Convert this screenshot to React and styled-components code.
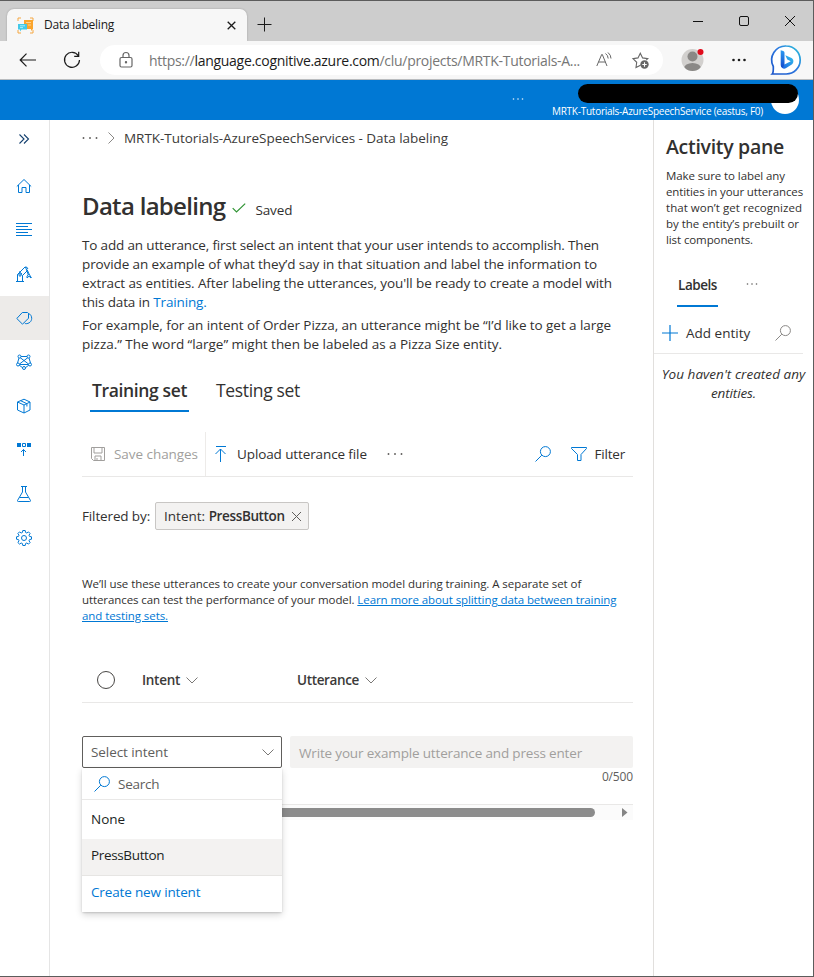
import React from "react";
import styled, { createGlobalStyle, css } from "styled-components";

const Global = createGlobalStyle`
  * { box-sizing: border-box; }
  body { margin: 0; background: #fff; font-family: "Open Sans", "Noto Sans", sans-serif; color: #323130; font-size: 13.5px; }
  svg { display: block; flex: none; overflow: visible; }
`;

const BLUE = "#0078d4";

const Window = styled.div`
  width: 814px; height: 977px; display: flex; flex-direction: column; overflow: hidden;
  background: #fff; border: solid #5c5c5c; border-width: 1px 1px 1px 0;
`;
const T = styled.span`
  display: inline-block; white-space: pre;
  letter-spacing: ${(p) => p.$ls || 0}px;
  font-size: ${(p) => p.$size || 13.5}px;
  font-weight: ${(p) => p.$w || 400};
  color: ${(p) => p.$c || "inherit"};
`;

/* ---- browser chrome ---- */
const TabStrip = styled.div`
  height: 40px; flex: none; background: #cdcdcd; display: flex; align-items: flex-end; padding-left: 7px;
`;
const BrowserTab = styled.div`
  width: 240px; height: 32px; background: #f7f7f7; border-radius: 7px 7px 0 0;
  display: flex; align-items: center; padding: 0 11px 0 10px; color: #1b1b1b;
  box-shadow: 0 0 2px rgba(0,0,0,.25);
`;
const TabTitle = styled(T)`flex: 1; margin-left: 10px; line-height: 16px; padding-bottom: 1px;`;
const NewTab = styled.div`height: 32px; display: flex; align-items: center; margin-left: 10px; padding-bottom: 2px;`;
const WinControls = styled.div`
  height: 40px; margin-left: auto; display: flex; align-items: center; gap: 36px; padding-right: 18px;
`;
const Toolbar = styled.div`
  height: 39px; flex: none; background: #f7f7f7; border-bottom: 1px solid #b9bcbf;
  display: flex; align-items: center; padding: 0 12px 0 19px;
`;
const Address = styled.div`
  width: 564px; height: 30px; margin-left: 19px; background: #fff; border-radius: 15px;
  display: flex; align-items: center; padding: 0 14px 0 19px;
`;
const Url = styled(T)`flex: 1; margin-left: 16px; color: #767676; b { font-weight: 400; color: #1b1b1b; }`;
const Gap = styled.div`width: ${(p) => p.$n}px; flex: none;`;

/* ---- azure header ---- */
const AzureBar = styled.header`
  height: 40px; flex: none; background: ${BLUE}; color: #fff; position: relative;
  display: flex; align-items: flex-end; justify-content: flex-end; padding: 0 14px 2px 0;
`;
const BarDots = styled.div`align-self: center; margin-right: 28px;`;
const Avatar = styled.div`width: 28px; height: 28px; border-radius: 50%; background: #fff; margin: 0 0 4px 8px;`;
const Redaction = styled.div`
  position: absolute; right: 15px; top: 4px; width: 220px; height: 19px; border-radius: 10px; background: #000;
`;

/* ---- page ---- */
const Body = styled.div`flex: 1; display: flex; min-height: 0;`;
const Nav = styled.nav`width: 50px; flex: none; border-right: 1px solid #e5e5e5;`;
const NavItem = styled.div`
  height: 44px; display: flex; align-items: center; justify-content: center; color: ${BLUE}; padding-right: 1px;
  background: ${(p) => (p.$active ? "#edebe9" : "transparent")};
  ${(p) => p.$first && css`padding-bottom: 6px;`}
`;
const Main = styled.main`width: 603px; flex: none; padding: 0 20px 0 32px;`;
const Crumbs = styled.div`height: 36px; display: flex; align-items: center; color: #3b3a39;`;
const TitleRow = styled.div`height: 34px; margin-top: 33px; display: flex; align-items: center; line-height: 34px;`;
const Saved = styled.div`display: flex; align-items: center; gap: 9px; padding-top: 7px;`;
const SavedMark = styled.div`padding-bottom: 3px;`;
const Paragraph = styled.div`
  line-height: ${(p) => p.$lh || 19}px; margin-top: ${(p) => p.$mt || 0}px;
  font-size: ${(p) => p.$size || 13.5}px;
  ${T} { display: block; font-size: ${(p) => p.$size || 13.5}px; }
`;
const Link = styled.a`color: ${BLUE}; text-decoration: ${(p) => (p.$u ? "underline" : "none")}; text-underline-offset: 1px;`;
const Tabs = styled.div`display: flex; height: 41px; margin: 17px 0 0 8px; gap: 25px;`;
const Tab = styled.div`
  height: 41px; line-height: 39px; padding: 0 2px; border-bottom: 2px solid ${(p) => (p.$on ? BLUE : "transparent")};
`;
const Commands = styled.div`
  height: 45px; margin-top: 20px; border-bottom: 1px solid #e9e8e7; display: flex; align-items: center;
`;
const SaveCmd = styled.div`
  width: 124px; height: 44px; border-right: 1px solid #edebe9; display: flex; align-items: center; gap: 9px;
  padding-left: 9px; color: #a19f9d;
`;
const UploadCmd = styled.div`display: flex; align-items: center; gap: 10px; margin: 0 20px 0 8px;`;
const RightCmds = styled.div`margin-left: auto; display: flex; align-items: center; padding-right: 8px;`;
const FilterRow = styled.div`display: flex; align-items: center; height: 28px; margin-top: 25px; gap: 5px;`;
const Tag = styled.div`
  width: 154px; height: 28px; border: 1px solid #c8c6c4; border-radius: 2px; background: #f3f2f1;
  display: flex; align-items: center; padding-left: 8px;
`;
const TableHead = styled.div`
  height: 45px; margin-top: 34px; border-bottom: 1px solid #e9e8e7; display: flex; align-items: center;
  padding-left: 15px; color: #3b3a39;
`;
const Check = styled.div`width: 18px; height: 18px; border: 1px solid #484644; border-radius: 50%; margin-right: 27px;`;
const Column = styled.div`width: 155px; display: flex; align-items: center; gap: 6px;`;
const Entry = styled.div`display: flex; gap: 8px; margin-top: 33px; height: 32px;`;
const Select = styled.div`
  width: 200px; height: 32px; position: relative; border: 1px solid #605e5c; border-radius: 2px;
  display: flex; align-items: center; justify-content: space-between; padding: 0 7px 0 8px; color: #605e5c;
`;
const Menu = styled.div`
  position: absolute; left: -1px; top: 31px; width: 200px; height: 144px; background: #fff; border-radius: 0 0 2px 2px;
  box-shadow: 0 3px 7px rgba(0,0,0,.16), 0 1px 2px rgba(0,0,0,.14); color: #201f1e;
`;
const MenuSearch = styled.div`
  height: 32px; display: flex; align-items: center; gap: 8px; padding-left: 12px;
  border-bottom: 1px solid #e9e8e7; color: #605e5c;
`;
const MenuItem = styled.div`
  height: ${(p) => p.$h}px; display: flex; align-items: center; padding: 0 0 ${(p) => p.$pb || 0}px 9px;
  background: ${(p) => (p.$hover ? "#f3f2f1" : "#fff")};
  border-bottom: ${(p) => (p.$hover ? "1px solid #e6e5e3" : "none")};
`;
const Input = styled.div`
  flex: 1; height: 32px; background: #f3f2f1; border-radius: 2px; color: #a19f9d;
  display: flex; align-items: center; padding: 2px 0 0 9px;
`;
const Counter = styled.div`text-align: right; line-height: 16px; color: #605e5c; height: 36px;`;
const Scroll = styled.div`
  height: 16px; border-top: 1px solid #e9e8e7; background: #fbfbfb; display: flex; align-items: center;
  padding: 0 5px 0 16px; justify-content: space-between;
`;
const Thumb = styled.div`width: 497px; height: 9px; border-radius: 5px; background: #8b8b8b;`;

const Aside = styled.aside`flex: 1; border-left: 1px solid #e1dfdd;`;
const AsideTitle = styled.div`padding: 13px 0 0 12px; line-height: 28px;`;
const AsideText = styled.div`padding: 5px 0 0 12px; line-height: 16px; ${T} { display: block; }`;
const AsideTabs = styled.div`display: flex; margin: 19px 0 0 23px; height: 40px; gap: 28px;`;
const AsideTab = styled.div`height: 40px; line-height: 37px; padding: 0 1px; border-bottom: 2px solid ${BLUE};`;
const AsideDots = styled.div`height: 34px; display: flex; align-items: center;`;
const AddRow = styled.div`
  height: 41px; margin: 6px 10px 0 0; border-bottom: 1px solid #e9e8e7; display: flex; align-items: center;
  padding: 0 12px 0 8px; justify-content: space-between;
`;
const AddButton = styled.div`display: flex; align-items: center; gap: 8px;`;
const Empty = styled.div`padding: 11px 0 0 0; line-height: 19px; text-align: center; font-style: italic;`;

/* ---- drawings ---- */
const Icon = ({ w = 16, h, vb, sw = 1, c = "currentColor", children, ...rest }) => (
  <svg width={w} height={h || w} viewBox={vb || `0 0 ${w} ${h || w}`} fill="none" stroke={c} strokeWidth={sw} {...rest}>
    {children}
  </svg>
);
const Dots = ({ c = "#605e5c", w = 16, r = 0.95 }) => (
  <Icon w={w} h={4} c="none">
    {[1.5, w / 2, w - 1.5].map((x) => <circle key={x} cx={x} cy="2" r={r} fill={c} />)}
  </Icon>
);
const SearchIcon = ({ c = BLUE }) => (
  <Icon w={16} c={c}><circle cx="10.4" cy="5.6" r="5" /><path d="M6.8 9.2L.5 15.5" /></Icon>
);
const Chevron = () => <Icon w={12} h={7} c="#7a7876"><path d="M.5.5L6 6l5.5-5.5" /></Icon>;

const Favicon = () => (
  <svg width="17" height="17" viewBox="0 0 17 17">
    <path d="M1 4V1h3M13 1h3v3M16 13v3h-3M4 16H1v-3" fill="none" stroke="#f5a742" />
    <path d="M7 3h9v9l-2 2v-2H7z" fill="#fba52d" />
    <path d="M9 5.5h5M11 8h3" stroke="#ffd390" />
    <path d="M1 7h9v5.5H4.5L3 14.5v-2H1z" fill="#43c9e8" />
    <path d="M3 8.800h5M3 10.600h3" stroke="#a9eefb" />
  </svg>
);
const Bing = () => (
  <svg width="30" height="31" viewBox="0 0 30 31">
    <defs>
      <linearGradient id="ring" x1="0" y1="1" x2="1" y2="0">
        <stop offset="0" stopColor="#1c55c9" /><stop offset=".55" stopColor="#2b78e0" /><stop offset="1" stopColor="#2cc3da" />
      </linearGradient>
      <linearGradient id="stem" x1="0" y1="0" x2="0" y2="1">
        <stop offset="0" stopColor="#2b9bf2" /><stop offset="1" stopColor="#1448cc" />
      </linearGradient>
      <linearGradient id="bowl" x1="0" y1="1" x2="1" y2="0">
        <stop offset="0" stopColor="#1a5fe0" /><stop offset="1" stopColor="#35c4ee" />
      </linearGradient>
    </defs>
    <path d="M15.200 1A14 14 0 0 1 15.200 29H1.200c1-1 1.300-3 1.100-7.500A14 14 0 0 1 15.200 1z" fill="#fff" stroke="url(#ring)" strokeWidth="1.700" />
    <path d="M14.300 10.300l2 4.300 3.500 1.700-9.800 5c.9 2.400 3.200 3 5.200 1.700l5.600-3.600c2.500-2 2-5.600-.8-6.700z" fill="url(#bowl)" />
    <path d="M9.700 5.200l2.600.9q1.200.5 1.200 1.700v12l-2 3q-1.800-.7-1.800-2.800z" fill="url(#stem)" />
  </svg>
);
const Person = () => (
  <svg width="24" height="24" viewBox="0 0 24 24">
    <defs><clipPath id="disc"><circle cx="11.500" cy="12" r="11" /></clipPath></defs>
    <circle cx="11.500" cy="12" r="11" fill="#d2d0ce" />
    <g clipPath="url(#disc)" fill="#8a8886"><circle cx="11.500" cy="8.500" r="5" /><ellipse cx="11.500" cy="20.500" rx="8.500" ry="5.500" /></g>
    <circle cx="19.500" cy="4" r="3" fill="#e00b1c" />
  </svg>
);

const navIcons = [
  <Icon key="home" w={16}><path d="M.8 8.500L8 1.500 15.200 8.500M2.500 7v7.500h3.500V9.500h4v5h3.500V7" /></Icon>,
  <Icon key="lines" w={16}><path d="M0 1.500h16M0 4.500h12M0 7.500h16M0 10.500h12M0 13.500h16" /></Icon>,
  <Icon key="robot" w={16}>
    <path d="M0 15.500h8M1.500 15.500V8.500L9 1l2 .3.900 1.700M6.500 15.500v-6L11 5M1.500 8.500L4 7.500l2.500 2M3 5.500l3 2.500M9.500 1l2.700 7.500M11 3.500l2.300 5M12.500 8l-2 3.500M13 8l2.500 4M11 12l2-1.800 2 1.800" /><circle cx="4" cy="9.500" r=".8" />
  </Icon>,
  <Icon key="tag" w={16}>
    <path d="M6.300 2.500L.8 8.500l5.700 5.700 6-6V3.500l-1-1zM12.300 3.300c2.300.9 3.400 3 3.400 5 0 3.300-2.700 5.500-6.200 5.400l-1-1" />
  </Icon>,
  <Icon key="graph" w={16}>
    <path d="M4 2.500h8M3 4l-1.500 5M13 4l1.500 5M3 11l4 3M13 11l-4 3M4 3.500l8.500 6.500M12 3.500L3.500 10M3.500 10.500h9" />
    <circle cx="3.500" cy="2.500" r="1.500" fill="#fff" /><circle cx="12.500" cy="2.500" r="1.500" fill="#fff" />
    <circle cx="2" cy="10.500" r="1.500" fill="#fff" /><circle cx="14" cy="10.500" r="1.500" fill="#fff" /><circle cx="8" cy="14" r="1.500" fill="#fff" />
  </Icon>,
  <Icon key="box" w={16}><path d="M1.500 4L8 1.200 14 4v8L8 15l-6.500-3zM1.500 4L8 7l6-3M8 7v8M4.600 2.700l6.300 3v2.800" /></Icon>,
  <Icon key="deploy" w={16}>
    <path d="M1 1h4v4H1zM11 1h4v4h-4z" fill={BLUE} stroke="none" /><path d="M6.500 1.500h3v3h-3zM7.500 14V7.500M5 10l2.500-2.500L10 10" />
  </Icon>,
  <Icon key="flask" w={16}><path d="M5 .5h6M6.500.5V6L1.500 14.500q-.2 1 .8 1h11.400q1 0 .8-1L9.500 6V.5M3.500 11.500h9" /></Icon>,
  <Icon key="gear" w={16}>
    <circle cx="8" cy="8" r="2.500" />
    <path d="M6.800.5h2.400l.4 2 1.200.5 1.700-1.100 1.600 1.600-1.100 1.700.5 1.200 2 .4v2.400l-2 .4-.5 1.200 1.100 1.700-1.600 1.600-1.700-1.100-1.200.5-.4 2H6.800l-.4-2-1.200-.5-1.700 1.100-1.600-1.600L3 10.800l-.5-1.200-2-.4V6.800l2-.4L3 5.200 1.900 3.500l1.600-1.600L5.200 3l1.200-.5z" />
  </Icon>,
];

export default function App() {
  return (
    <Window>
      <Global />
      <TabStrip>
        <BrowserTab>
          <Favicon />
          <TabTitle $size={12} $ls={-0.24}>Data labeling</TabTitle>
          <Icon w={9} c="#1b1b1b" sw={1.3}><path d="M.7.7l7.600 7.600M8.300.7L.7 8.300" /></Icon>
        </BrowserTab>
        <NewTab><Icon w={14} c="#1b1b1b"><path d="M7.500.5v14M.5 7.500h14" /></Icon></NewTab>
        <WinControls>
          <Icon w={10} c="#111"><path d="M0 5.500h10" /></Icon>
          <Icon w={10} c="#111"><rect x=".5" y=".5" width="9" height="9" rx="1.500" /></Icon>
          <Icon w={10} c="#111"><path d="M0 0l10 10M10 0L0 10" /></Icon>
        </WinControls>
      </TabStrip>
      <Toolbar>
        <Icon w={17} h={14} c="#1b1b1b" sw={1.2}><path d="M17 7H1.500M7.500.7L1.200 7l6.300 6.300" /></Icon>
        <Gap $n={27} />
        <Icon w={18} c="#1b1b1b" sw={1.2}><path d="M15.300 4.700A7.500 7.500 0 1 0 16.500 9M15.700.8v4.500h-4.500" /></Icon>
        <Address>
          <Icon w={14} h={16} c="#666" sw={1.2}>
            <rect x="1" y="5.500" width="12" height="9.500" rx="1.500" /><path d="M4 5.500V3.500a3 3 0 0 1 6 0v2" /><circle cx="7" cy="10.200" r=".6" fill="#666" />
          </Icon>
          <Url $size={14} $ls={-0.29}>https://<b>language.cognitive.azure.com</b>/clu/projects/MRTK-Tutorials-A...</Url>
          <Icon w={16} c="#666">
            <path d="M.8 14L5.700 2.500h.6L11 14M2.500 10h7M9.500 1.500q2.500 1.700 2.700 5M12 .5q3 2.500 3 6" />
          </Icon>
          <Gap $n={20} />
          <Icon w={17} c="#666" sw={1.1}>
            <path d="M8.500 13.200L4 15.500l.7-5.200L1 6.700l5-.8L8.300 1.200l2.300 4.700 5.200.8-1.600 1.500" /><circle cx="12.500" cy="12.500" r="4.200" fill="#666" stroke="none" /><path d="M12.500 10.300v4.400M10.300 12.500h4.400" stroke="#fff" />
          </Icon>
        </Address>
        <Gap $n={18} /><Person /><Gap $n={27} /><Dots c="#1b1b1b" w={14} r={1.3} /><Gap $n={25} /><Bing />
      </Toolbar>
      <AzureBar>
        <BarDots><Dots c="#e5f1fb" w={12} r={0.8} /></BarDots>
        <T $size={10} $ls={-0.25}>MRTK-Tutorials-AzureSpeechService (eastus, F0)</T>
        <Avatar />
        <Redaction />
      </AzureBar>
      <Body>
        <Nav>
          <NavItem $first><Icon w={10} c="#14406f" sw={1.1}><path d="M.5.5L5 5 .5 9.500M5 .5L9.500 5 5 9.500" /></Icon></NavItem>
          {navIcons.map((icon, i) => <NavItem key={i} $active={i === 3}>{icon}</NavItem>)}
        </Nav>
        <Main>
          <Crumbs>
            <Dots /><Gap $n={10} />
            <Icon w={7} h={12} c="#8a8886"><path d="M.5.5L6 6 .5 11.500" /></Icon><Gap $n={9} />
            <T $ls={-0.047}>MRTK-Tutorials-AzureSpeechServices - Data labeling</T>
          </Crumbs>
          <TitleRow>
            <T $size={24} $w={600} $ls={-0.7}>Data labeling</T><Gap $n={7} />
            <Saved>
              <SavedMark><Icon w={14} h={10} c="#2f9333" sw={1.2}><path d="M.7 5.200L4.500 9 13.200.6" /></Icon></SavedMark>
              <T $ls={-0.1}>Saved</T>
            </Saved>
          </TitleRow>
          <Paragraph $mt={13}>
            <T $ls={-0.158}>To add an utterance, first select an intent that your user intends to accomplish. Then</T>
            <T $ls={-0.101}>provide an example of what they’d say in that situation and label the information to</T>
            <T $ls={-0.104}>extract as entities. After labeling the utterances, you'll be ready to create a model with</T>
            <T $ls={-0.15}>this data in <Link>Training.</Link></T>
          </Paragraph>
          <Paragraph $mt={4}>
            <T $ls={-0.065}>For example, for an intent of Order Pizza, an utterance might be “I’d like to get a large</T>
            <T $ls={-0.04}>pizza.” The word “large” might then be labeled as a Pizza Size entity.</T>
          </Paragraph>
          <Tabs>
            <Tab $on><T $size={17.5} $w={600} $ls={-0.363}>Training set</T></Tab>
            <Tab><T $size={17.5} $ls={-0.331}>Testing set</T></Tab>
          </Tabs>
          <Commands>
            <SaveCmd>
              <Icon w={14}><path d="M.5.5h13v13h-11l-2-2zM3 .5v5.500h8V.5M4 13.500V9h6v4.500M6 11v2.500" /></Icon>
              <T $ls={-0.05}>Save changes</T>
            </SaveCmd>
            <UploadCmd>
              <Icon w={13} h={16} c={BLUE}><path d="M2 .5h10M6.500 16V3M1.500 8l5-5 5 5" /></Icon>
              <T $ls={-0.11}>Upload utterance file</T>
            </UploadCmd>
            <Dots />
            <RightCmds>
              <SearchIcon /><Gap $n={20} />
              <Icon w={16} c={BLUE}><path d="M.5 1.500h15v1L10 8.500v6H6.500v-6l-6-6z" /></Icon><Gap $n={8} />
              <T $ls={-0.2}>Filter</T>
            </RightCmds>
          </Commands>
          <FilterRow>
            <T $ls={-0.13}>Filtered by:</T>
            <Tag>
              <T>Intent: </T><T $w={600} $ls={-0.365}>PressButton</T><Gap $n={7} />
              <Icon w={9} c="#605e5c"><path d="M0 0l9 9M9 0L0 9" /></Icon>
            </Tag>
          </FilterRow>
          <Paragraph $mt={46} $lh={16} $size={11.5}>
            <T $ls={-0.063}>We’ll use these utterances to create your conversation model during training. A separate set of</T>
            <T $ls={-0.088}>utterances can test the performance of your model. <Link $u>Learn more about splitting data between training</Link></T>
            <T $ls={-0.078}><Link $u>and testing sets.</Link></T>
          </Paragraph>
          <TableHead>
            <Check />
            <Column><T $w={600} $ls={-0.288}>Intent</T><Chevron /></Column>
            <Column><T $w={600} $ls={-0.355}>Utterance</T><Chevron /></Column>
          </TableHead>
          <Entry>
            <Select>
              <T $ls={-0.07}>Select intent</T><Chevron />
              <Menu>
                <MenuSearch><SearchIcon /><T $ls={-0.25}>Search</T></MenuSearch>
                <MenuItem $h={39} $pb={1}><T>None</T></MenuItem>
                <MenuItem $h={37} $hover $pb={4}><T $ls={-0.35}>PressButton</T></MenuItem>
                <MenuItem $h={36} $pb={4}><T $ls={-0.155} $c={BLUE}>Create new intent</T></MenuItem>
              </Menu>
            </Select>
            <Input><T $ls={-0.165}>Write your example utterance and press enter</T></Input>
          </Entry>
          <Counter><T $size={12} $ls={-0.15}>0/500</T></Counter>
          <Scroll><Thumb /><Icon w={6} h={9} c="none"><path d="M0 0l5.500 4.500L0 9z" fill="#858585" /></Icon></Scroll>
        </Main>
        <Aside>
          <AsideTitle><T $size={19.5} $w={600} $ls={-0.297}>Activity pane</T></AsideTitle>
          <AsideText>
            <T $size={11.5} $ls={-0.08}>Make sure to label any</T>
            <T $size={11.5} $ls={-0.115}>entities in your utterances</T>
            <T $size={11.5} $ls={0.04}>that won’t get recognized</T>
            <T $size={11.5} $ls={-0.036}>by the entity’s prebuilt or</T>
            <T $size={11.5} $ls={-0.098}>list components.</T>
          </AsideText>
          <AsideTabs>
            <AsideTab><T $w={600} $ls={-0.448}>Labels</T></AsideTab>
            <AsideDots><Dots w={12} r={0.8} /></AsideDots>
          </AsideTabs>
          <AddRow>
            <AddButton><Icon w={16} c={BLUE} sw={1.2}><path d="M8 0v16M0 8h16" /></Icon><T>Add entity</T></AddButton>
            <SearchIcon c="#8a8886" />
          </AddRow>
          <Empty><T $ls={0.04}>You haven't created any</T><br /><T $ls={-0.1}>entities.</T></Empty>
        </Aside>
      </Body>
    </Window>
  );
}
